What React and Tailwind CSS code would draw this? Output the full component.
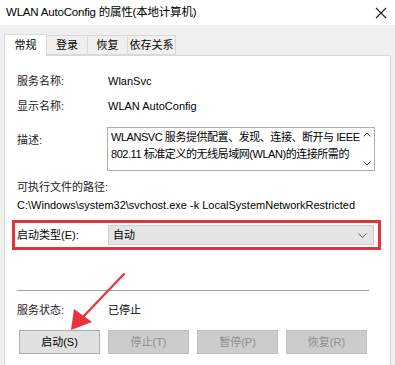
import React from "react";

const font = { fontFamily: '"Liberation Sans", "Noto Sans CJK SC", sans-serif' };

const Tab = ({ label, active, w }) => (
  <div
    className={
      active
        ? "relative z-10 -mb-px flex h-[22px] items-center justify-center whitespace-nowrap border border-b-0 border-[#d9d9d9] bg-white text-[11px] text-black"
        : "mt-[2px] flex h-[20px] items-center justify-center whitespace-nowrap border border-l-0 border-[#d9d9d9] bg-[#f0f0f0] text-[11px] text-black"
    }
    style={{ width: w }}
  >
    {label}
  </div>
);

const Btn = ({ label, disabled }) => (
  <div
    className={`flex h-[24px] w-[81px] items-center justify-center border text-[11px] ${
      disabled
        ? "border-[#bfbfbf] bg-[#cccccc] text-[#8c8c8c]"
        : "border-[#adadad] bg-[#e1e1e1] text-black"
    }`}
  >
    {label}
  </div>
);

export default function App() {
  return (
    <div className="relative h-[365px] w-[395px] overflow-hidden bg-[#f0f0f0]" style={font}>
      {/* title bar */}
      <div className="flex h-[25px] items-center justify-between bg-white pl-[6px] pr-[4px]">
        <span className="text-[11.5px] tracking-[-0.2px] text-black">WLAN AutoConfig 的属性(本地计算机)</span>
        <svg width="14" height="14" viewBox="0 0 14 14" className="mr-[3px]">
          <path d="M2 2 L12 12 M12 2 L2 12" stroke="#222" strokeWidth="1.1" />
        </svg>
      </div>

      <div className="pl-[4px] pr-[4px] pt-[8px]">
        {/* tabs */}
        <div className="flex items-end">
          <Tab label="常规" active w={43} />
          <Tab label="登录" w={41} />
          <Tab label="恢复" w={40} />
          <Tab label="依存关系" w={48} />
        </div>

        {/* panel */}
        <div className="h-[320px] border border-[#d9d9d9] bg-white pl-[12px] pr-[10px] pt-[15px] text-[11px] text-black">
          <div className="flex h-[20px] items-center">
            <span className="w-[91px] text-[#222]">服务名称:</span>
            <span>WlanSvc</span>
          </div>
          <div className="mt-[5px] flex h-[20px] items-center">
            <span className="w-[91px] text-[#222]">显示名称:</span>
            <span>WLAN AutoConfig</span>
          </div>
          <div className="mt-[11px] flex">
            <span className="mt-[5px] w-[90px] text-[#222]">描述:</span>
            <div className="flex h-[44px] w-[268px] border border-[#abadb3]">
              <div className="flex-1 whitespace-nowrap pl-[3px] pt-[1px] leading-[17px] tracking-[-0.45px]">
                WLANSVC 服务提供配置、发现、连接、断开与 IEEE
                <br />
                802.11 标准定义的无线局域网(WLAN)的连接所需的
              </div>
              <div className="flex w-[16px] flex-col items-center justify-between py-[4px]">
                <svg width="8" height="5" viewBox="0 0 8 5"><path d="M0.5 4.5 L4 1 L7.5 4.5" fill="none" stroke="#606060" /></svg>
                <svg width="8" height="5" viewBox="0 0 8 5"><path d="M0.5 0.5 L4 4 L7.5 0.5" fill="none" stroke="#606060" /></svg>
              </div>
            </div>
          </div>
          <div className="mt-[7px] h-[18px] leading-[18px] text-[#222]">可执行文件的路径:</div>
          <div className="h-[18px] whitespace-nowrap leading-[18px]">C:\Windows\system32\svchost.exe -k LocalSystemNetworkRestricted</div>

          <div className="-ml-[5px] mt-[6px] flex h-[30px] w-[369px] items-center border-[3px] border-[#e0343f] pl-[2px]">
            <span className="w-[91px]">启动类型(E):</span>
            <div className="flex h-[20px] w-[266px] items-center justify-between border border-[#cfcfcf] bg-[#e5e5e5] pl-[4px] pr-[6px]">
              <span>自动</span>
              <svg width="9" height="5" viewBox="0 0 9 5"><path d="M0.5 0.5 L4.5 4.5 L8.5 0.5" fill="none" stroke="#606060" /></svg>
            </div>
          </div>

          <div className="mt-[40px] h-px w-[352px] bg-[#a0a0a0]" />

          <div className="mt-[9px] flex h-[20px] items-center">
            <span className="w-[91px] text-[#222]">服务状态:</span>
            <span>已停止</span>
          </div>

          <div className="mt-[10px] flex gap-[8px] pl-[2px]">
            <Btn label="启动(S)" />
            <Btn label="停止(T)" disabled />
            <Btn label="暂停(P)" disabled />
            <Btn label="恢复(R)" disabled />
          </div>
        </div>
      </div>

      {/* annotation arrow */}
      <svg className="pointer-events-none absolute left-0 top-0" width="395" height="365">
        <path d="M124 274 L82 318" stroke="#e8323c" strokeWidth="2.2" strokeLinecap="round" />
        <path d="M71 330 L74 309 L92 322 Z" fill="#e8323c" />
      </svg>
    </div>
  );
}
